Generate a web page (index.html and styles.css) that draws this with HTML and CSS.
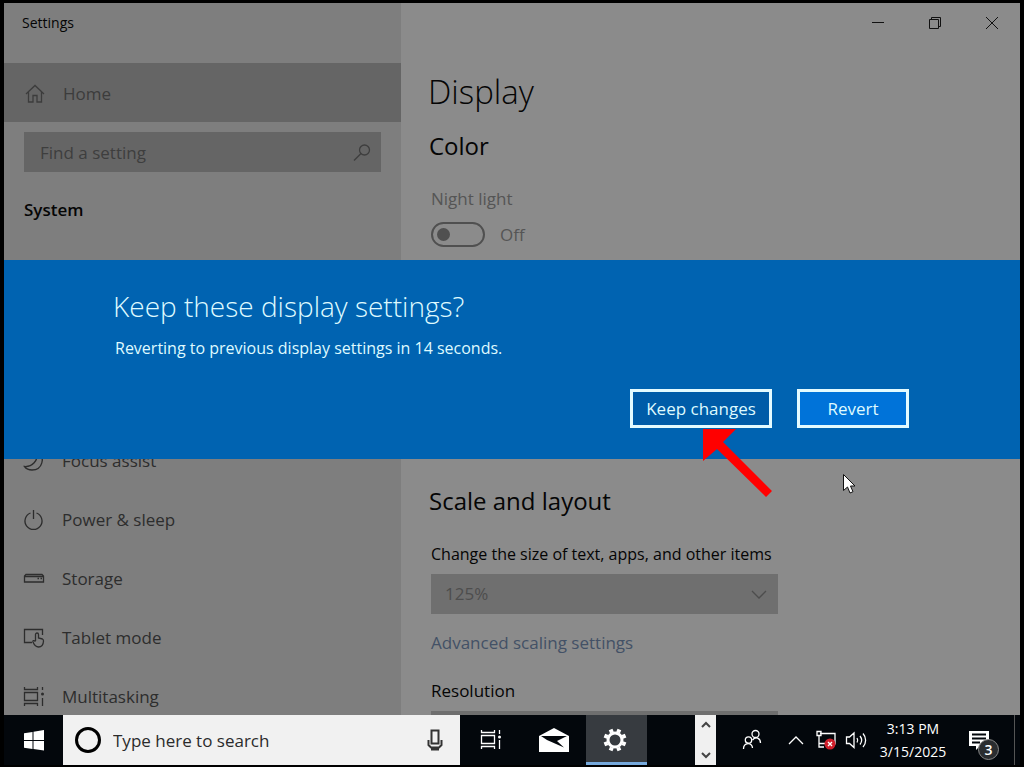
FILE: index.html
```html
<!DOCTYPE html>
<html lang="en">
<head>
<meta charset="utf-8">
<title>Settings</title>
<link rel="stylesheet" href="styles.css">
</head>
<body>
<main class="window">
  <aside class="sidebar">
    <div class="window-title">Settings</div>
    <a class="home" href="#">
      <svg class="icon" width="22" height="22" viewBox="0 0 22 22"><path d="M2 11 11 2.500l9 8.500M4.500 9v10h4.500v-6.500h4V19h4.500V9"/></svg>
      Home
    </a>
    <div class="find">
      <input class="find-input" type="text" placeholder="Find a setting" aria-label="Find a setting">
      <svg class="icon" width="20" height="20" viewBox="0 0 20 20"><circle cx="12.500" cy="7" r="5"/><path d="M9 10.500 2 17.500"/></svg>
    </div>
    <h2 class="section-name">System</h2>
    <nav class="nav">
      <a class="nav-item" href="#"><svg class="icon" width="22" height="22" viewBox="0 0 22 22"><path d="M14 2c9 5 5.500 18-5 18-4 0-6-1.500-7.500-3.500C9 17 15.500 11 14 2z"/></svg>Focus assist</a>
      <a class="nav-item" href="#"><svg class="icon" width="22" height="22" viewBox="0 0 22 22"><path d="M7.500 4a8.500 8.500 0 1 0 6 0M10.500 1v9"/></svg>Power &amp; sleep</a>
      <a class="nav-item" href="#"><svg class="icon" width="22" height="22" viewBox="0 0 22 22"><path d="M1.500 8 3 6.500h16L20.500 8v6h-19zM1.500 8.500h19M14.500 10.500h1.500M17.500 10.500h1.500"/></svg>Storage</a>
      <a class="nav-item" href="#"><svg class="icon" width="22" height="22" viewBox="0 0 22 22"><path d="M9 15.500H1.500v-13h18V8M12.500 14V7.500c0-2 3-2 3 0V11l4 1c1 .3 1 1 1 2-.200 4-2 6-5 6-2.500 0-4-1.500-5.500-5-.500-1.500 1-2 2.500-.500"/></svg>Tablet mode</a>
      <a class="nav-item" href="#"><svg class="icon" width="22" height="22" viewBox="0 0 22 22"><path d="M1.500 1v2.500h13V1M1.500 6.500h13v8h-13zM1.500 20v-2.500h13V20M19.500 1v3M19.500 12v8"/><circle class="solid" cx="19.500" cy="8" r="1.500"/></svg>Multitasking</a>
    </nav>
  </aside>
  <section class="content">
    <div class="window-controls">
      <button class="window-button" aria-label="Minimize"><svg width="14" height="14" viewBox="0 0 14 14"><path d="M1 6.500h12"/></svg></button>
      <button class="window-button" aria-label="Restore"><svg width="14" height="14" viewBox="0 0 14 14"><path d="M1.500 3.500h9v9h-9zM3.500 3.500v-2h9v9h-2"/></svg></button>
      <button class="window-button" aria-label="Close"><svg width="14" height="14" viewBox="0 0 14 14"><path d="m1 1 12 12M13 1 1 13"/></svg></button>
    </div>
    <h1 class="page-title">Display</h1>
    <h2 class="heading">Color</h2>
    <label class="toggle-label" for="night-light">Night light</label>
    <div class="toggle-row">
      <input class="toggle" type="checkbox" id="night-light" disabled>
      <span>Off</span>
    </div>
    <div class="scale">
      <h2 class="heading">Scale and layout</h2>
      <label class="field-label" for="scale-size">Change the size of text, apps, and other items</label>
      <div class="select-box">
        <select class="select" id="scale-size"><option>125%</option></select>
        <svg class="icon select-arrow" width="18" height="10" viewBox="0 0 18 10"><path d="m2 1 7 7 7-7"/></svg>
      </div>
      <a class="link" href="#">Advanced scaling settings</a>
      <label class="field-label" for="resolution">Resolution</label>
      <select class="select" id="resolution"></select>
    </div>
  </section>
  <div class="overlay">
    <div class="dialog" role="dialog" aria-labelledby="dialog-title">
      <h2 class="dialog-title" id="dialog-title">Keep these display settings?</h2>
      <p class="dialog-text">Reverting to previous display settings in 14 seconds.</p>
      <div class="dialog-actions">
        <div class="keep">
          <button class="button">Keep changes</button>
          <svg class="arrow" width="70" height="69" viewBox="0 0 70 69"><path d="M0 0h33L20 13 69 62l-6 6L14 20 0 32z"/></svg>
        </div>
        <button class="button button-primary">Revert</button>
      </div>
      <svg class="cursor" width="16" height="22" viewBox="0 0 16 22"><path d="M1.500 1.500v16l4-3.500 2.500 6 3-1.300-2.500-5.700h4.500z"/></svg>
    </div>
  </div>
</main>
<footer class="taskbar">
  <button class="start" aria-label="Start"><svg width="22" height="22" viewBox="0 0 22 22"><path d="M1 4.300 9.500 3v8H1zM10.500 2.800 21 1v10H10.500zM1 12h8.500v8L1 18.700zM10.500 12H21v9.500l-10.500-1.500z"/></svg></button>
  <div class="task-search">
    <svg width="28" height="28" viewBox="0 0 28 28"><circle class="ring" cx="14" cy="14" r="11.500"/></svg>
    <input class="task-input" type="text" placeholder="Type here to search" aria-label="Type here to search">
    <svg width="16" height="22" viewBox="0 0 16 22"><path class="mic" d="M4.500 1.500h7v13h-7zM1.500 11v5l2.500 2.500h8l2.500-2.500v-5M8 18.500v2M4 20.500h8"/></svg>
  </div>
  <button class="task-button" aria-label="Task view"><svg class="line" width="22" height="22" viewBox="0 0 22 22"><path d="M1.500 1v2.500h13V1M1.500 6.500h13v8h-13zM1.500 20v-2.500h13V20M19.500 1v4M19.500 11v9"/><circle class="solid" cx="19.500" cy="8" r="1.500"/></svg></button>
  <button class="task-button" aria-label="Mail"><svg width="32" height="26" viewBox="0 0 32 26"><path class="fill" d="M1 9 16 1l15 8v16H1z"/><path class="hole" d="M3 9h26l-10 5 7 6.500L9 13z"/></svg></button>
  <button class="task-button task-active" aria-label="Settings"><svg width="24" height="24" viewBox="0 0 24 24"><circle class="gear" cx="12" cy="12" r="7"/><path class="teeth" d="M15.100 4.600 16.400 1.400M19.400 8.900l3.200-1.300M19.400 15.100l3.200 1.300M15.100 19.400l1.300 3.200M8.900 19.400l-1.300 3.200M4.600 15.100l-3.200 1.300M4.600 8.900 1.400 7.600M8.900 4.600 7.600 1.400"/></svg></button>
  <div class="scroller">
    <button class="scroll-button" aria-label="Scroll up"><svg width="12" height="8" viewBox="0 0 12 8"><path d="m2 6 4-4 4 4"/></svg></button>
    <button class="scroll-button" aria-label="Scroll down"><svg width="12" height="8" viewBox="0 0 12 8"><path d="m2 2 4 4 4-4"/></svg></button>
  </div>
  <button class="people" aria-label="People"><svg class="line" width="20" height="22" viewBox="0 0 20 22"><circle cx="13.500" cy="5" r="3.500"/><circle cx="6.500" cy="11" r="3.200"/><path d="M1.500 20c0-7 9-7 9-1M10.500 11c3-4 8-2 8 3"/></svg></button>
  <div class="tray">
    <button class="tray-button" aria-label="Show hidden icons"><svg class="line" width="18" height="12" viewBox="0 0 18 12"><path d="m2 10 7-7 7 7"/></svg></button>
    <button class="tray-button" aria-label="Network"><svg class="line" width="22" height="22" viewBox="0 0 22 22"><path d="M5 4.500h15v11M4 14.500h7M2 2.500h4v4H2zM4 6.500v11.500h5"/><circle class="alert" cx="15" cy="15" r="5.500"/><path d="m13 13 4 4M17 13l-4 4"/></svg></button>
    <button class="tray-button" aria-label="Volume"><svg class="line" width="22" height="20" viewBox="0 0 22 20"><path d="M1.500 7v6.500h3L9 17.500V3L4.500 7zM12 8c1 1.500 1 3 0 4.500M15 6c2 2.500 2 6 0 8.500M18 3.500c3.500 4 3.500 9.500 0 13.500"/></svg></button>
  </div>
  <div class="clock"><span>3:13 PM</span><span>3/15/2025</span></div>
  <button class="notices" aria-label="Notifications">
    <svg width="22" height="22" viewBox="0 0 22 22"><path class="fill" d="M1 2h20v15h-9l-4 4v-4H1z"/><path class="rules" d="M4 5.500h14M4 9.500h14M4 13.500h8"/></svg>
    <span class="badge">3</span>
  </button>
</footer>
</body>
</html>
```
FILE: styles.css
```css
* { box-sizing: border-box; }

body {
  display: flex;
  flex-direction: column;
  height: 100vh;
  margin: 0;
  padding: 3px 4px 2px;
  overflow: hidden;
  background: #000;
  color: #050505;
  font: 17px/24px "Open Sans", "Noto Sans", sans-serif;
}

h1, h2, p { margin: 0; font-weight: 400; }
a { color: inherit; text-decoration: none; }
svg { display: block; flex: none; fill: none; }
button, input, select { margin: 0; border: 0; border-radius: 0; font: inherit; color: inherit; }
button { display: flex; align-items: center; justify-content: center; padding: 0; background: none; }
.icon { stroke: currentColor; stroke-width: 1.3; }
.solid { fill: currentColor; stroke: none; }

.window { position: relative; display: flex; flex: 1; min-height: 0; background: #8b8b8b; }

.sidebar {
  display: flex;
  flex-direction: column;
  flex: none;
  width: 397px;
  overflow: hidden;
  background: #7e7e7e;
}
.window-title { height: 60px; padding: 8px 18px; font-size: 14px; }
.home {
  display: flex;
  align-items: center;
  gap: 17px;
  height: 59px;
  padding: 2px 20px 0;
  background: #656565;
  color: #3c3c3c;
}
.find {
  display: flex;
  align-items: center;
  height: 40px;
  margin: 10px 20px 0;
  padding: 2px 9px 0 16px;
  background: #656565;
  color: #3e3e3e;
}
.find-input { flex: 1; min-width: 0; padding: 0; background: none; }
.find-input::placeholder { color: #3e3e3e; opacity: 1; }
.section-name { margin: 26px 20px 0; font-size: 17px; font-weight: 600; }
.nav { margin: auto 0 -12px; color: #2d2d2d; }
.nav-item { display: flex; align-items: center; gap: 17px; height: 59px; padding: 0 0 2px 19px; }

.content { display: flex; flex-direction: column; flex: 1; min-width: 0; overflow: hidden; padding-left: 26px; }
.window-controls { display: flex; justify-content: flex-end; height: 40px; }
.window-button { width: 57px; }
.window-button svg { stroke: #111; }
.page-title { margin-top: 27px; padding-left: 1px; font-size: 33px; line-height: 44px; font-weight: 300; }
.heading { padding-left: 2px; font-size: 24px; line-height: 32px; }
.page-title + .heading { margin-top: 16px; }
.toggle-label { margin: 25px 0 0 4px; color: #555; }
.toggle-row { display: flex; align-items: center; gap: 15px; margin: 11px 0 0 4px; color: #555; }
.toggle {
  display: flex;
  align-items: center;
  width: 54px;
  height: 25px;
  padding-left: 4px;
  appearance: none;
  border: 2px solid #505050;
  border-radius: 13px;
}
.toggle::before { content: ""; width: 13px; height: 13px; border-radius: 50%; background: #505050; }
.scale { display: flex; flex-direction: column; align-items: flex-start; margin: auto 0 -36px; }
.scale .field-label, .scale .link { margin-left: 4px; }
.scale .heading + .field-label { margin-top: 25px; font-size: 16px; }
.select-box { position: relative; width: 347px; margin: 8px 0 17px 4px; }
.select {
  width: 347px;
  height: 40px;
  padding: 0 14px;
  appearance: none;
  background: #6f6f6f;
  color: #4d4d4d;
  opacity: 1;
}
.select-arrow { position: absolute; top: 16px; right: 10px; color: #4d4d4d; }
.link { margin-bottom: 24px; color: #435166; }
.link + .field-label + .select { margin: 8px 0 0 4px; }

.overlay { position: absolute; inset: 0; display: flex; flex-direction: column; justify-content: center; }
.dialog { position: relative; padding: 26px 111px 31px 109px; background: #0063b1; color: #dffaff; }
.dialog-title { font-size: 28px; line-height: 40px; font-weight: 300; }
.dialog-text { margin: 10px 0 0 2px; font-size: 16px; }
.dialog-actions { display: flex; justify-content: flex-end; gap: 25px; margin-top: 29px; }
.keep { position: relative; }
.button { width: 112px; height: 39px; padding-top: 2px; border: 3px solid #e4fbff; background: #005ca8; }
.keep .button { width: 142px; }
.button-primary { background: #0073d9; }
.arrow { position: absolute; top: 40px; left: 73px; fill: #f00; }
.cursor { position: absolute; right: 162px; bottom: -36px; fill: #fff; stroke: #111; }

.taskbar { display: flex; flex: none; height: 50px; background: #03070c; color: #fff; }
.start { width: 59px; }
.start svg { fill: #fff; }
.task-search { display: flex; align-items: center; flex: 0 1 397px; padding: 0 17px 0 11px; background: #f1f1f1; color: #2b2b2b; }
.task-input { flex: 1; min-width: 0; padding: 2px 11px 0; background: none; }
.task-input::placeholder { color: #2b2b2b; opacity: 1; }
.ring { stroke: #000; stroke-width: 3; }
.mic { stroke: #333; stroke-width: 2; }
.task-button { width: 61px; margin-right: 2px; }
.line { stroke: #fff; stroke-width: 1.3; }
.fill { fill: #fff; }
.hole { fill: #03070c; }
.task-active { margin: 0; padding-right: 4px; background: #373b40; border-bottom: 3px solid #76a9dc; border-top: 3px solid transparent; }
.gear { stroke: #fff; stroke-width: 3; }
.teeth { stroke: #fff; stroke-width: 4; }
.scroller { display: flex; flex-direction: column; justify-content: space-between; width: 21px; margin-left: auto; padding: 6px 0; background: #f0f0f0; }
.scroll-button svg { stroke: #444; stroke-width: 2; }
.people { width: 65px; padding-left: 7px; }
.tray { display: flex; }
.tray-button { width: 30px; }
.alert { fill: #d01f2b; stroke: none; }
.clock { display: flex; flex-direction: column; justify-content: center; align-items: center; width: 84px; font-size: 14px; line-height: 23px; }
.notices { position: relative; width: 60px; margin-right: 5px; padding-right: 11px; border-right: 1px solid #555; }
.rules { stroke: #03070c; stroke-width: 2; }
.badge {
  position: absolute;
  right: 15px;
  bottom: 5px;
  width: 21px;
  height: 21px;
  border: 1px solid #888;
  border-radius: 50%;
  background: #2a2d30;
  font-size: 14px;
  line-height: 19px;
  font-weight: 600;
}
```
